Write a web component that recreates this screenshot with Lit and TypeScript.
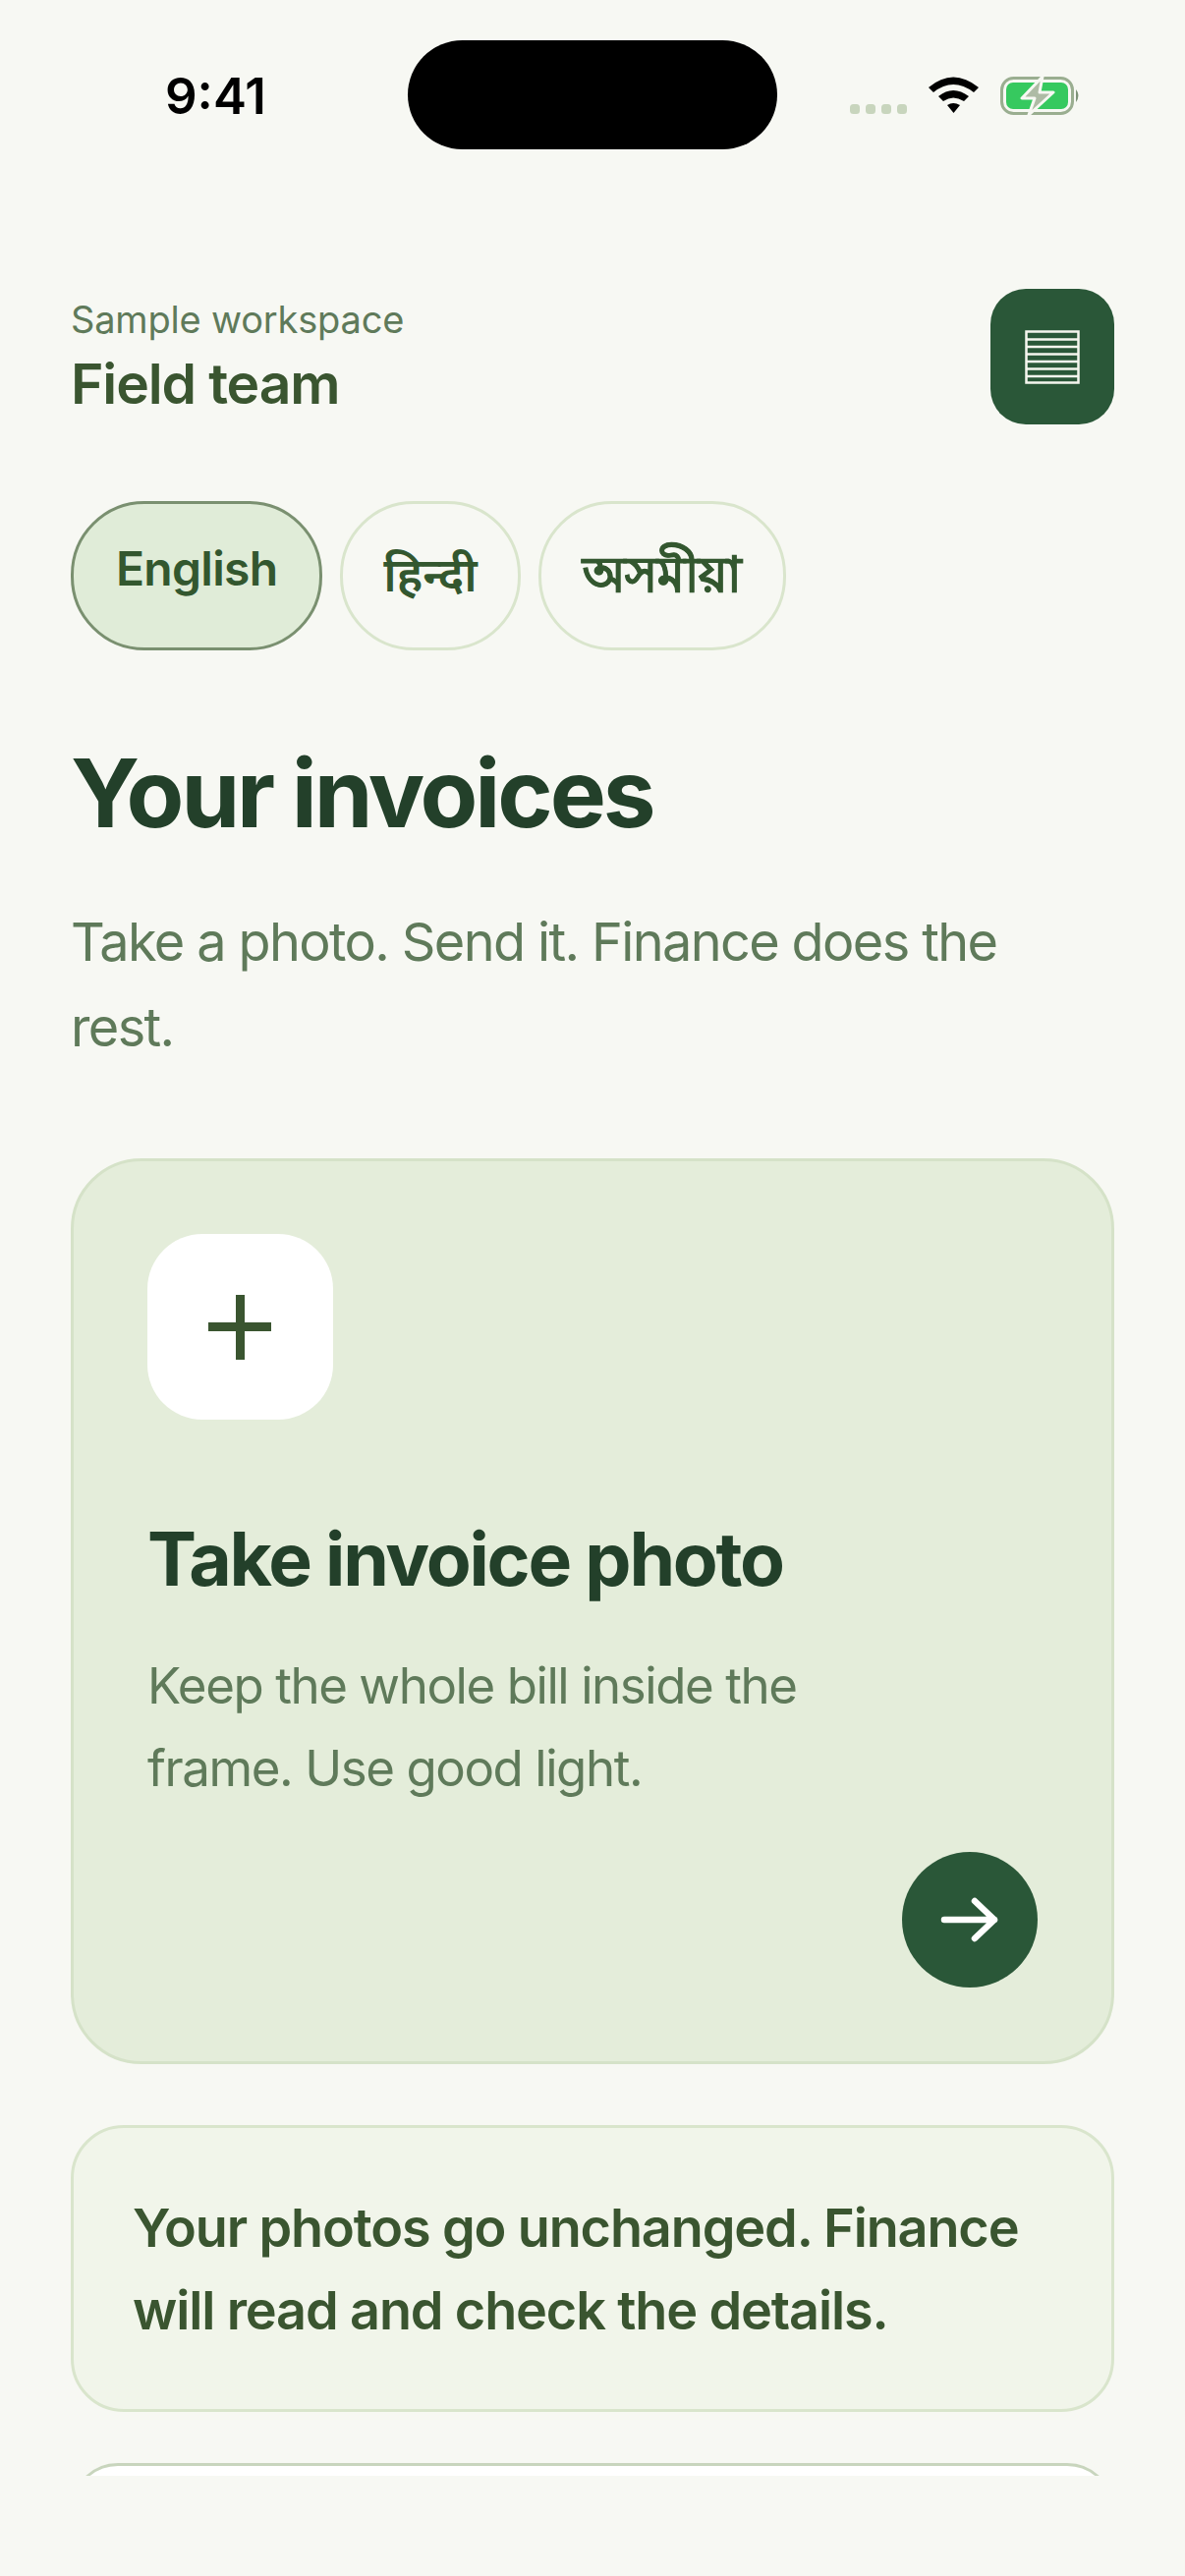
import { LitElement, html, css } from "lit";
import { customElement } from "lit/decorators.js";

@customElement("app-root")
export class AppRoot extends LitElement {
  static styles = css`
    :host { display: block; width: 1206px; height: 2622px; background: #f7f8f3; overflow: hidden; font-family: Inter, "Noto Sans", sans-serif; color: #23402a; }
    .status { height: 174px; position: relative; display: flex; }
    .time { position: absolute; left: 168px; top: 68px; font-size: 51px; line-height: 60px; font-weight: 600; color: #000; }
    .island { position: absolute; left: 415px; top: 41px; width: 376px; height: 111px; border-radius: 56px; background: #000; }
    .sys { position: absolute; left: 865px; top: 78px; }
    .scroll { height: 2346px; overflow: hidden; padding: 120px 72px 0; box-sizing: border-box; }
    .head { display: flex; justify-content: space-between; align-items: center; }
    .ws { font-size: 38px; line-height: 48px; color: #5f7a5a; letter-spacing: -0.005em; margin-top: -2px; }
    .team { font-size: 57px; line-height: 66px; font-weight: 600; color: #3a5530; margin-top: 9px; letter-spacing: -0.02em; }
    .menu { width: 126px; height: 138px; border-radius: 36px; background: #2a5738; display: flex; align-items: center; justify-content: center; }
    .chips { display: flex; gap: 18px; margin-top: 78px; }
    .chip { box-sizing: border-box; height: 152px; padding: 36px 43px; border: 3px solid #d9e5cc; border-radius: 75px; font-size: 48px; line-height: 60px; font-weight: 600; color: #33572f; letter-spacing: -0.015em; }
    .chip.on { background: #e0ecd8; border-color: #7a9070; }
    .chip.hi { padding: 42px 41px 0; letter-spacing: 0; }
    .chip.as { padding: 41px 42px 0; letter-spacing: 0; font-size: 50px; -webkit-text-stroke: 0.8px #33572f; }
    h1 { margin: 85px 0 0; font-size: 96px; line-height: 120px; font-weight: 700; color: #23402a; letter-spacing: -0.032em; }
    .sub { margin: 48px 0 0; font-size: 54px; line-height: 87px; color: #5f7a5a; letter-spacing: -0.03em; max-width: 1000px; }
    .card { box-sizing: border-box; height: 922px; margin-top: 90px; padding: 74px 75px; background: #e4edda; border: 3px solid #d5e2c8; border-radius: 72px; position: relative; }
    .tile { width: 189px; height: 189px; border-radius: 56px; background: #fff; display: flex; align-items: center; justify-content: center; }
    h2 { margin: 97px 0 0; font-size: 75px; line-height: 90px; font-weight: 700; color: #23402a; letter-spacing: -0.03em; }
    .desc { margin: 42px 0 0; font-size: 51px; line-height: 84px; color: #5f7a5a; max-width: 780px; letter-spacing: -0.028em; }
    .go { position: absolute; right: 75px; bottom: 75px; width: 138px; height: 138px; border-radius: 50%; background: #2a5738; display: flex; align-items: center; justify-content: center; }
    .note { box-sizing: border-box; height: 292px; margin-top: 62px; padding: 60px 60px; background: #f1f5ea; border: 3px solid #d9e5cc; border-radius: 54px; font-size: 54px; line-height: 84px; font-weight: 600; color: #3a5530; letter-spacing: -0.021em; }
    .next { height: 200px; margin-top: 52px; background: #fff; border: 3px solid #c8d5bd; border-radius: 48px; }
  `;

  render() {
    return html`
      <div class="status">
        <div class="time">9:41</div>
        <div class="island"></div>
        <svg class="sys" width="240" height="42" viewBox="0 0 240 42">
          <g fill="#c8d5bd">
            <rect x="0" y="28" width="10" height="10" rx="3.5"/>
            <rect x="16" y="28" width="10" height="10" rx="3.5"/>
            <rect x="32" y="28" width="10" height="10" rx="3.5"/>
            <rect x="48" y="28" width="10" height="10" rx="3.5"/>
          </g>
          <g fill="#000">
            <path d="M80 11 Q105 -10 131 11 L126 16 Q105 0 85 16 Z"/>
            <path d="M90 20 Q105 8 121 20 L116 25 Q105 18 95 25 Z"/>
            <path d="M99 29 Q105 25 112 29 L105.500 37 Z"/>
          </g>
          <rect x="154.500" y="1.500" width="72" height="36" rx="12" fill="none" stroke="#9aae90" stroke-width="3"/>
          <rect x="159" y="6" width="63" height="27" rx="7" fill="#36c95f"/>
          <path d="M230 13 Q235 19 230 26 Z" fill="#7d9277"/>
          <path d="M196 0 L175 22 H188 L182 39 L207 16 H193 Z" fill="#aebba5" stroke="#f7f8f3" stroke-width="3" stroke-linejoin="round"/>
        </svg>
      </div>
      <div class="scroll">
        <div class="head">
          <div>
            <div class="ws">Sample workspace</div>
            <div class="team">Field team</div>
          </div>
          <div class="menu">
            <svg width="56" height="55" viewBox="0 0 56 55">
              <path d="M1.500 1.500H54.500V53.500H1.500ZM1.500 9.500H54.500M1.500 17H54.500M1.500 24.500H54.500M1.500 32H54.500M1.500 39.500H54.500M1.500 47H54.500" fill="none" stroke="#f5f6ee" stroke-width="2.500"/>
            </svg>
          </div>
        </div>
        <div class="chips">
          <div class="chip on">English</div>
          <div class="chip hi">हिन्दी</div>
          <div class="chip as">অসমীয়া</div>
        </div>
        <h1>Your invoices</h1>
        <p class="sub">Take a photo. Send it. Finance does the rest.</p>
        <div class="card">
          <div class="tile">
            <svg width="66" height="66" viewBox="0 0 66 66"><path d="M32.500 0V66M0 32.500H64" stroke="#3a5530" stroke-width="9" fill="none"/></svg>
          </div>
          <h2>Take invoice photo</h2>
          <p class="desc">Keep the whole bill inside the frame. Use good light.</p>
          <div class="go">
            <svg width="60" height="48" viewBox="0 0 60 48"><path d="M4 24H55M35 5L55 24L35 43" stroke="#fff" stroke-width="6.500" stroke-linecap="round" stroke-linejoin="round" fill="none"/></svg>
          </div>
        </div>
        <div class="note">Your photos go unchanged. Finance will read and check the details.</div>
        <div class="next"></div>
      </div>
    `;
  }
}
